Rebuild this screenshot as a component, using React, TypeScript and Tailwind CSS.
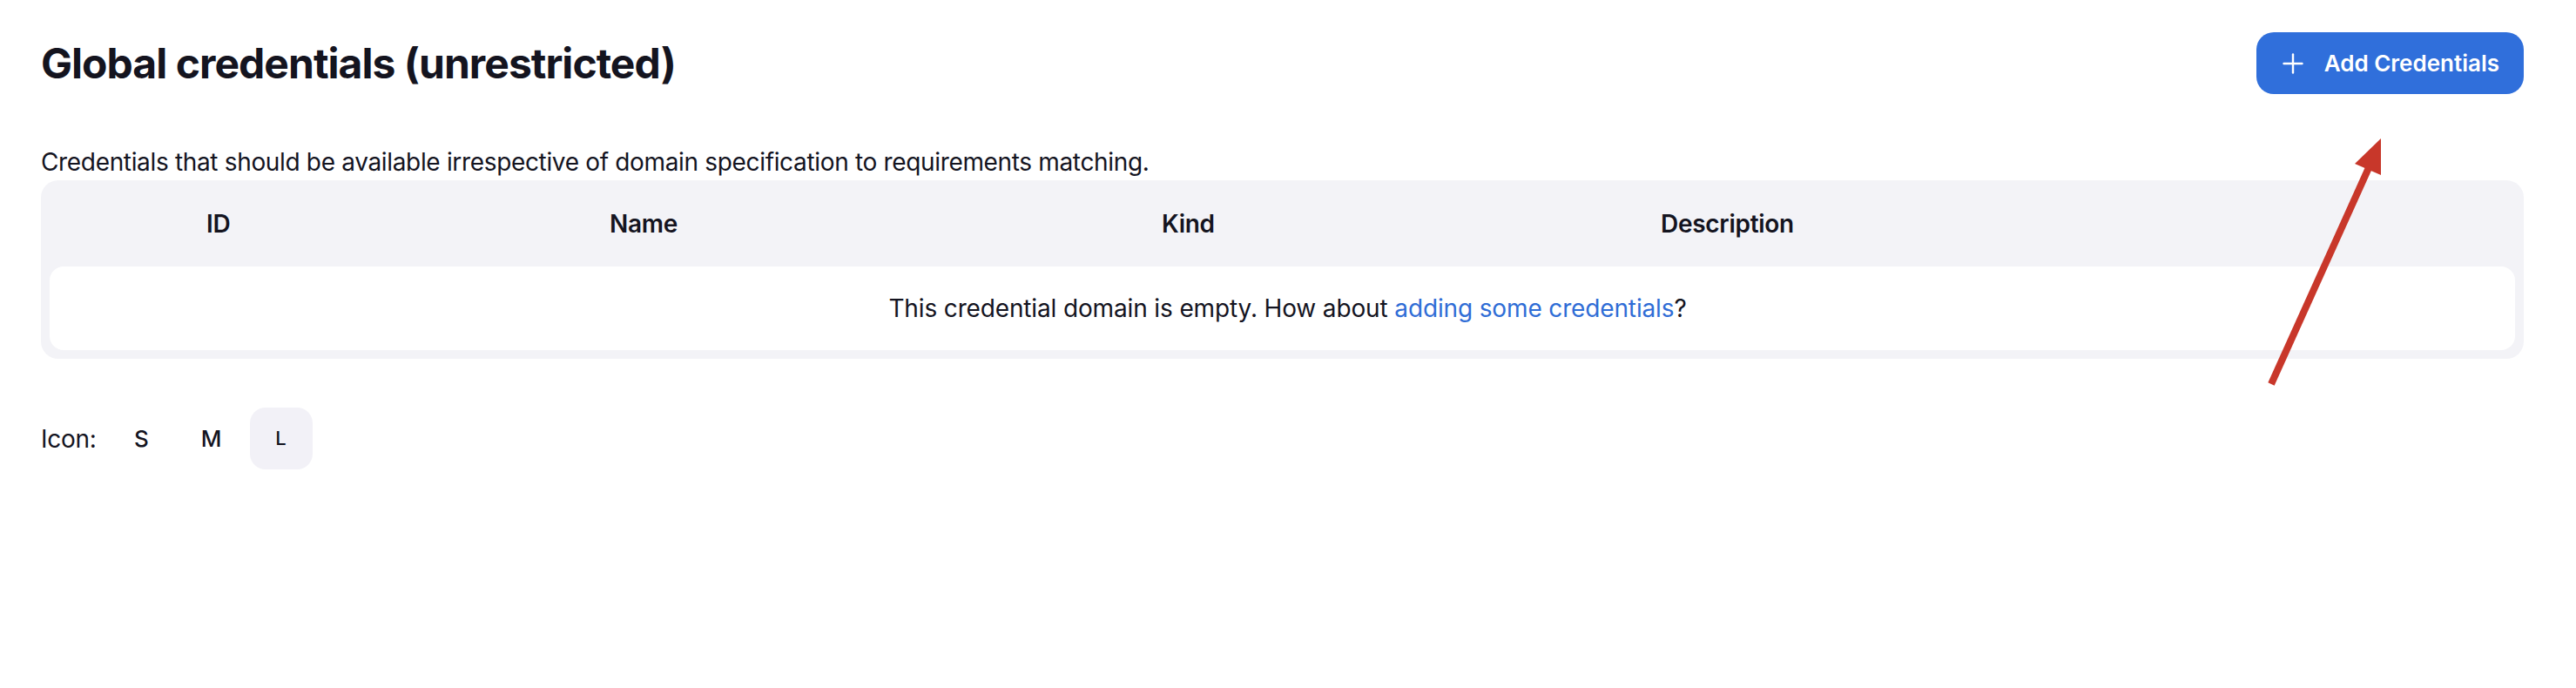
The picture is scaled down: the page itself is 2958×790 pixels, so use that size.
import React from 'react';

const font = { fontFamily: 'Inter, "Noto Sans", sans-serif' };

const columns = ['ID', 'Name', 'Kind', 'Description'];

const PlusIcon = () => (
  <svg width="24" height="24" viewBox="0 0 24 24" fill="none" stroke="currentColor" strokeWidth="2.4" strokeLinecap="round">
    <line x1="12" y1="1.5" x2="12" y2="22.5" />
    <line x1="1.5" y1="12" x2="22.5" y2="12" />
  </svg>
);

const Arrow = () => (
  <svg className="absolute left-[2590px] top-[150px]" width="160" height="300" viewBox="0 0 160 300">
    <line x1="18" y1="291" x2="133" y2="36" stroke="#c8372a" strokeWidth="8" />
    <polygon points="144,9 114,38 144,51" fill="#c8372a" />
  </svg>
);

export default function App() {
  return (
    <div className="relative w-[2958px] h-[790px] bg-white text-[#14141f]" style={font}>
      <div className="pl-[47px] pr-[60px] pt-[37px]">
        <div className="flex items-center justify-between h-[71px]">
          <h1 className="text-[48px] leading-[58px] font-bold tracking-[-0.02em]">Global credentials (unrestricted)</h1>
          <button className="flex items-center gap-[24px] h-[71px] pl-[30px] pr-[28px] rounded-[20px] bg-[#306fdb] text-white text-[26px] font-semibold">
            <PlusIcon />
            Add Credentials
          </button>
        </div>

        <p className="mt-[58px] text-[28px] leading-[40px] tracking-[-0.012em]">
          Credentials that should be available irrespective of domain specification to requirements matching.
        </p>

        <div className="mt-px rounded-[20px] bg-[#f3f3f7] px-[10px] pb-[10px]">
          <div className="grid grid-cols-[180px_463px_634px_573px_1fr] h-[99px] items-center text-[28px] font-semibold tracking-[-0.01em]">
            <div />
            {columns.map((c) => (
              <div key={c}>{c}</div>
            ))}
          </div>
          <div className="h-[96px] rounded-[16px] bg-white flex items-center justify-center text-[28px] tracking-[-0.005em]">
            <span className="ml-[12px]">
              This credential domain is empty. How about{' '}
              <a href="#" className="text-[#2f6dd6]">adding some credentials</a>?
            </span>
          </div>
        </div>

        <div className="mt-[56px] flex items-center h-[71px]">
          <span className="text-[28px] mr-[16px] tracking-[-0.01em]">Icon:</span>
          <div className="flex gap-[8px]">
            <button className="w-[72px] h-[71px] rounded-[18px] text-[26px] font-medium">S</button>
            <button className="w-[72px] h-[71px] rounded-[18px] text-[26px] font-medium">M</button>
            <button className="w-[72px] h-[71px] rounded-[18px] bg-[#f2f1f7] text-[22px] font-medium">L</button>
          </div>
        </div>
      </div>
      <Arrow />
    </div>
  );
}
